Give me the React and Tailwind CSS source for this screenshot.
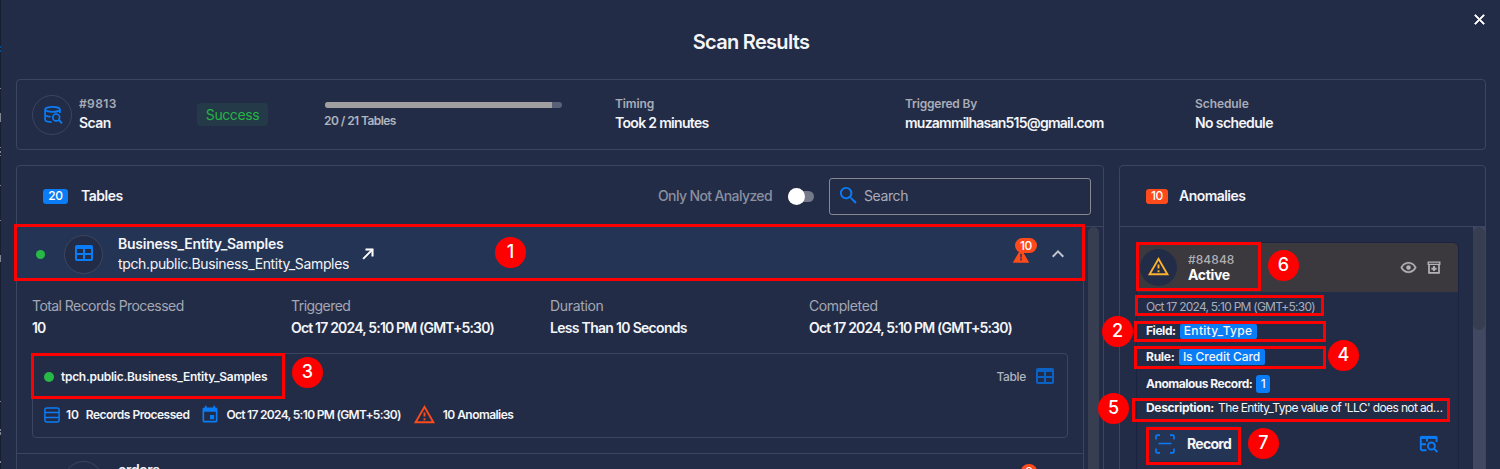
const ICONS = {
  table:
    "M5,4H19A2,2 0 0,1 21,6V18A2,2 0 0,1 19,20H5A2,2 0 0,1 3,18V6A2,2 0 0,1 5,4M5,8V12H11V8H5M13,8V12H19V8H13M5,14V18H11V14H5M13,14V18H19V14H13Z",
  arrow: "M5,17.59L15.59,7H9V5H19V15H17V8.41L6.41,19L5,17.59Z",
  alert: "M13 14H11V9H13M13 18H11V15H13M1 21H23L12 2L1 21Z",
  alertOutline:
    "M12,2L1,21H23M12,6L19.53,19H4.47M11,10V14H13V10M11,16V18H13V16",
  calendar:
    "M19,19H5V8H19M16,1V3H8V1H6V3H5C3.89,3 3,3.89 3,5V19A2,2 0 0,0 5,21H19A2,2 0 0,0 21,19V5C21,3.89 20.1,3 19,3H18V1M17,12H12V17H17V12Z",
  chevronUp: "M7.41,15.41L12,10.83L16.59,15.41L18,14L12,8L6,14L7.41,15.41Z",
  search:
    "M9.5,3A6.5,6.5 0 0,1 16,9.5C16,11.11 15.41,12.59 14.44,13.73L14.71,14H15.5L20.5,19L19,20.5L14,15.5V14.71L13.73,14.44C12.59,15.41 11.11,16 9.5,16A6.5,6.5 0 0,1 3,9.5A6.5,6.5 0 0,1 9.5,3M9.5,5C7,5 5,7 5,9.5C5,12 7,14 9.5,14C12,14 14,12 14,9.5C14,7 12,5 9.5,5Z",
  eye: "M12,9A3,3 0 0,1 15,12A3,3 0 0,1 12,15A3,3 0 0,1 9,12A3,3 0 0,1 12,9M12,4.5C17,4.5 21.27,7.61 23,12C21.27,16.39 17,19.5 12,19.5C7,19.5 2.73,16.39 1,12C2.73,7.61 7,4.5 12,4.5M3.18,12C4.83,15.36 8.24,17.5 12,17.5C15.76,17.5 19.17,15.36 20.82,12C19.17,8.64 15.76,6.5 12,6.5C8.24,6.5 4.83,8.64 3.18,12Z",
  close:
    "M19,6.41L17.59,5L12,10.59L6.41,5L5,6.41L10.59,12L5,17.59L6.41,19L12,13.41L17.59,19L19,17.59L13.41,12L19,6.41Z",
};

function Icon({ name, className }) {
  return (
    <svg viewBox="0 0 24 24" fill="currentColor" className={`shrink-0 ${className}`}>
      <path d={ICONS[name]} />
    </svg>
  );
}

function DatabaseSearchIcon() {
  return (
    <svg viewBox="0 0 19 18" className="h-[18px] w-[19px] shrink-0 text-[#0a7cf6]" fill="none" stroke="currentColor" strokeWidth="1.7">
      <ellipse cx="8.5" cy="3.4" rx="7.4" ry="2.5" />
      <path d="M1.1 3.4V13.6C1.1 15 3.6 16 7.6 16.1M1.1 8.5C1.1 9.6 3.2 10.5 6.6 10.7M15.9 3.4V7" />
      <circle cx="12.2" cy="11.4" r="3.4" />
      <path d="M14.7 13.9L18 17.2" strokeWidth="2" />
    </svg>
  );
}

function RowsIcon() {
  return (
    <svg viewBox="0 0 16 16" className="size-4 shrink-0 text-[#0a7cf6]" fill="none" stroke="currentColor" strokeWidth="1.5">
      <rect x="0.9" y="0.9" width="14.2" height="14.2" rx="2" />
      <path d="M1 5.6H15M1 10.4H15" />
    </svg>
  );
}

function ScanIcon() {
  return (
    <svg viewBox="0 0 20 20" className="size-5 shrink-0 text-[#0a7cf6]" fill="none" stroke="currentColor" strokeWidth="1.6">
      <path d="M1 5.5V2.5A1.4 1.4 0 0 1 2.4 1.1H5M15 1.1H17.6A1.4 1.4 0 0 1 19 2.5V5.5M19 14.5V17.5A1.4 1.4 0 0 1 17.6 18.9H15M5 18.9H2.4A1.4 1.4 0 0 1 1 17.5V14.5M3.5 9.5H16.5" />
    </svg>
  );
}

function TableSearchIcon() {
  return (
    <svg viewBox="0 0 20 18" className="h-[18px] w-5 shrink-0 text-[#0a7cf6]" fill="none" stroke="currentColor" strokeWidth="1.9">
      <path d="M7.5 15.2H3A1.2 1.2 0 0 1 1.8 14V2.5H17.6V7M1.8 9.3H7M8 3V6.5" />
      <path d="M1.8 2.4H17.6" strokeWidth="3" strokeLinejoin="round" />
      <circle cx="12.4" cy="11" r="3.5" />
      <path d="M15 13.6L18.4 17" />
    </svg>
  );
}

function ArchiveIcon() {
  return (
    <svg viewBox="0 0 14 13" className="h-[13px] w-3.5 shrink-0 text-[#b4b4b8]" fill="none" stroke="currentColor">
      <path d="M1.2 1.2H12.8V3.4H1.2Z" strokeWidth="1.3" />
      <path d="M2 4V11.8H12V4" strokeWidth="1.7" />
      <path d="M7 5V10M4.4 7.8H9.6" strokeWidth="1.9" />
    </svg>
  );
}

function Labelled({ label, value, className, labelClass, valueClass }) {
  return (
    <div className={className}>
      <div className={`whitespace-nowrap text-xs leading-[18px] font-semibold text-[#a9adb8] ${labelClass}`}>{label}</div>
      <div className={`whitespace-nowrap text-sm leading-5 font-semibold text-[#f4f5f8] ${valueClass}`}>{value}</div>
    </div>
  );
}

function Detail({ label, value, labelClass, valueClass }) {
  return (
    <div className="w-[259px]">
      <div className={`whitespace-nowrap text-sm leading-[22px] text-[#a3a8b3] ${labelClass}`}>{label}</div>
      <div className={`whitespace-nowrap text-sm leading-[22px] font-semibold text-[#f4f5f8] ${valueClass}`}>{value}</div>
    </div>
  );
}

// Specks of the page that stays visible beside the drawer
function PageEdge() {
  return (
    <svg viewBox="0 0 1 469" className="h-[469px] w-px shrink-0 bg-[#171f31]">
      <path d="M0 46h1v2h-1zM0 50h1v2h-1z" fill="#0b4d92" />
      <path
        d="M0 88h1v1h-1zM0 113h1v9h-1zM0 147h1v1h-1zM0 151h1v2h-1zM0 155h1v1h-1zM0 185h1v1h-1zM0 220h1v1h-1zM0 255h1v7h-1zM0 401h1v1h-1zM0 429h1v2h-1zM0 432h1v3h-1zM0 461h1v2h-1z"
        fill="#7f858f"
      />
    </svg>
  );
}

function Frame({ className }) {
  return <div className={`absolute border-3 border-[#ff0000] ${className}`} />;
}

function Marker({ n, className }) {
  return (
    <div className={`absolute flex size-[31px] justify-center rounded-full bg-[#ff0000] text-lg leading-[29px] font-medium text-white ${className}`}>
      {n}
    </div>
  );
}

function Summary() {
  return (
    <section className="flex h-[71px] w-[1470px] shrink-0 rounded border border-[#3c4560] pl-[15px]">
      <div className="flex w-[165px] pt-[15px]">
        <div className="flex size-10 items-center justify-center rounded-full border border-[#3c4560] pl-0.5">
          <DatabaseSearchIcon />
        </div>
        <Labelled className="ml-[7px]" label="#9813" value="Scan" labelClass="tracking-[0.4px]" valueClass="tracking-[-0.6px]" />
      </div>
      <div className="w-[128px] pt-[23px]">
        <div className="flex h-[23px] w-[71px] items-center justify-center rounded bg-[#243a48] text-sm leading-[21px] tracking-[-0.4px] text-[#24b445]">Success</div>
      </div>
      <div className="w-[290px] pt-[22px]">
        <div className="h-1.5 w-[237px] overflow-hidden rounded-full bg-[#596077]">
          <div className="h-full w-[227px] bg-[#a0a0a0]" />
        </div>
        <div className="mt-1 -ml-px text-xs leading-[18px] font-semibold tracking-[-0.57px] text-[#b0b4be]">20 / 21 Tables</div>
      </div>
      <Labelled className="w-[290px] pt-[15px]" label="Timing" value="Took 2 minutes" labelClass="tracking-[-0.14px]" valueClass="tracking-[-0.68px]" />
      <Labelled className="w-[290px] pt-[15px]" label="Triggered By" value="muzammilhasan515@gmail.com" labelClass="tracking-[-0.2px]" valueClass="tracking-[-0.77px]" />
      <Labelled className="pt-[15px]" label="Schedule" value="No schedule" labelClass="tracking-[-0.08px]" valueClass="tracking-[-0.62px]" />
    </section>
  );
}

function TablesPanel() {
  return (
    <section className="flex h-[320px] w-[1088px] shrink-0 flex-col rounded border border-[#3c4560]">
      <header className="flex h-[61px] shrink-0 items-center border-b border-[#3c4560] pr-3 pl-[26px]">
        <span className="flex h-[15px] w-[25px] items-center justify-center rounded-[3px] bg-[#0a7cf6] text-xs font-medium tracking-[-0.3px] text-white">20</span>
        <h2 className="ml-[13px] text-sm font-semibold tracking-[-0.5px] text-[#f4f5f8]">Tables</h2>
        <span className="ml-auto text-sm font-medium tracking-[-0.62px] text-[#8a90a0]">Only Not Analyzed</span>
        <div className="mr-[15px] ml-4 flex h-[17px] w-[26px] items-center">
          <div className="flex h-[11px] w-full items-center rounded-full bg-[#747a8a]">
            <div className="size-[17px] shrink-0 rounded-full bg-white" />
          </div>
        </div>
        <div className="flex h-[37px] w-[262px] items-center rounded-[3px] border border-[#85888f] pl-[7px]">
          <Icon name="search" className="mb-0.5 size-[23px] text-[#0a7cf6]" />
          <span className="ml-1 text-sm tracking-[-0.4px] text-[#a9adb8]">Search</span>
        </div>
      </header>
      <div className="flex h-[258px] shrink-0">
        <div className="w-[1067px] shrink-0 border-r border-[#3c4560]">
          <div className="flex h-[54px] items-center bg-[#243455] pl-[19px]">
            <span className="size-[9px] rounded-full bg-[#27b946]" />
            <div className="ml-[19px] flex size-[39px] items-center justify-center rounded-full border border-[#3c4560] bg-[#232c47]">
              <Icon name="table" className="mb-0.5 size-6 text-[#0a7cf6]" />
            </div>
            <div className="ml-[15px] w-[231px] whitespace-nowrap text-[#f4f5f8]">
              <div className="text-sm leading-5 font-semibold tracking-[-0.25px]">Business_Entity_Samples</div>
              <div className="text-sm leading-5 tracking-[-0.35px]">tpch.public.Business_Entity_Samples</div>
            </div>
            <Icon name="arrow" className="ml-2.5 size-[18px] stroke-white stroke-[0.7] text-white" />
            <div className="relative ml-auto flex">
              <Icon name="alert" className="mt-1 size-[18px] text-[#ff4a1c]" />
              <span className="absolute -top-[5px] left-[3px] flex h-[15px] w-[22px] items-center justify-center rounded-full bg-[#ff4a1c] text-xs font-medium tracking-[-0.3px] text-white">10</span>
            </div>
            <Icon name="chevronUp" className="mr-[13px] ml-4 size-6 text-[#c0c5d0]" />
          </div>
          <div className="flex pt-3.5 pl-[15px]">
            <Detail label="Total Records Processed" value="10" labelClass="tracking-[-0.56px]" valueClass="tracking-[-0.8px]" />
            <Detail label="Triggered" value="Oct 17 2024, 5:10 PM (GMT+5:30)" labelClass="tracking-[-0.55px]" valueClass="tracking-[-0.82px]" />
            <Detail label="Duration" value="Less Than 10 Seconds" labelClass="tracking-[-0.33px]" valueClass="tracking-[-0.7px]" />
            <Detail label="Completed" value="Oct 17 2024, 5:10 PM (GMT+5:30)" labelClass="tracking-[-0.4px]" valueClass="tracking-[-0.82px]" />
          </div>
          <div className="mt-3.5 ml-[15px] flex h-[85px] w-[1036px] flex-col rounded border border-[#3c4560] pr-2.5 pl-[11px] text-xs font-semibold text-[#f4f5f8]">
            <div className="mt-[11px] flex h-6 shrink-0 items-center">
              <span className="size-2.5 rounded-full bg-[#27b946]" />
              <span className="ml-[7px] tracking-[-0.28px]">tpch.public.Business_Entity_Samples</span>
              <span className="ml-auto font-medium tracking-[-0.35px] text-[#b0b4be]">Table</span>
              <Icon name="table" className="mb-0.5 ml-[7px] size-6 text-[#0b62c4]" />
            </div>
            <div className="mt-[15px] flex h-[22px] shrink-0 items-center">
              <RowsIcon />
              <span className="ml-1.5 tracking-[-0.1px]">10</span>
              <span className="ml-[7px] tracking-[-0.5px]">Records Processed</span>
              <Icon name="calendar" className="ml-[11px] size-5 text-[#0a7cf6]" />
              <span className="ml-1.5 tracking-[-0.69px]">Oct 17 2024, 5:10 PM (GMT+5:30)</span>
              <Icon name="alertOutline" className="mb-0.5 ml-3 size-[23px] text-[#ff4a1c]" />
              <span className="ml-[7px] tracking-[-0.55px]">10 Anomalies</span>
            </div>
          </div>
          <div className="mt-[15px] flex border-t border-[#3c4560] pt-[7px] pl-[47px]">
            <div className="size-[39px] rounded-full border border-[#3c4560]" />
            <div className="ml-[15px] text-sm leading-[18px] font-semibold tracking-[-0.4px] text-[#f4f5f8]">orders</div>
            <span className="mt-[3px] mr-[46px] ml-auto flex h-[15px] w-4 items-center justify-center rounded-full bg-[#ff4a1c] text-xs font-medium text-white">8</span>
          </div>
        </div>
        <div className="ml-1 w-[11px] rounded-t-full bg-[#373e52]" />
      </div>
    </section>
  );
}

function AnomaliesPanel() {
  return (
    <section className="flex h-[320px] w-[367px] shrink-0 flex-col rounded border border-[#3c4560]">
      <header className="flex h-[61px] shrink-0 items-center border-b border-[#3c4560] pl-[26px]">
        <span className="flex h-[15px] w-[22px] items-center justify-center rounded-[3px] bg-[#ff4a1c] text-xs font-medium tracking-[-0.3px] text-white">10</span>
        <h2 className="ml-[11px] text-sm font-semibold tracking-[-0.55px] text-[#f4f5f8]">Anomalies</h2>
      </header>
      <div className="flex h-[258px] shrink-0 justify-between">
        <div className="mt-[15px] ml-4 h-[260px] w-[323px] shrink-0 rounded-md border border-[#1a2340] text-xs">
          <div className="flex h-[49px] items-center rounded-t-[5px] bg-[#3b393e] pl-[3px]">
            <div className="flex size-[37px] items-center justify-center rounded-full bg-[#232c47]">
              <Icon name="alertOutline" className="mb-0.5 size-[23px] text-[#fbb12d]" />
            </div>
            <div className="ml-[11px]">
              <div className="leading-[15px] font-medium tracking-[0.07px] text-[#b0b0b4]">#84848</div>
              <div className="text-sm leading-4 font-bold tracking-[-0.35px] text-white">Active</div>
            </div>
            <Icon name="eye" className="ml-auto size-[17px] stroke-[#b4b4b8] stroke-[0.6] text-[#b4b4b8]" />
            <div className="mr-[17px] ml-[10px]">
              <ArchiveIcon />
            </div>
          </div>
          <div className="pl-[9px] whitespace-nowrap text-[#f4f5f8]">
            <div className="mt-[5px] h-5 leading-5 tracking-[-0.75px] text-[#a9adb8]">Oct 17 2024, 5:10 PM (GMT+5:30)</div>
            <div className="mt-1.5 flex h-4 items-center">
              <span className="font-bold tracking-[-0.45px]">Field:</span>
              <span className="ml-1 flex h-[15px] w-[77px] items-center justify-center rounded-xs bg-[#0a7cf6] font-medium tracking-[0.3px]">Entity_Type</span>
            </div>
            <div className="mt-2.5 flex h-4 items-center">
              <span className="font-bold tracking-[-0.25px]">Rule:</span>
              <span className="ml-1 flex h-4 w-[86px] items-center justify-center rounded-xs bg-[#0a7cf6] font-medium tracking-[-0.08px]">Is Credit Card</span>
            </div>
            <div className="mt-2.5 flex h-[18px] items-center">
              <span className="font-bold tracking-[-0.5px]">Anomalous Record:</span>
              <span className="ml-1 flex h-[18px] w-3.5 items-center justify-center rounded-[3px] bg-[#0a7cf6] font-medium">1</span>
            </div>
            <div className="mt-1.5 flex h-[18px] items-center">
              <span className="font-bold tracking-[-0.32px]">Description:</span>
              <span className="ml-1 tracking-[-0.62px]">The Entity_Type value of 'LLC' does not ad…</span>
            </div>
            <div className="mt-[9px] mr-[19px] flex h-[35px] items-center">
              <div className="flex h-full w-[93px] items-center bg-[#243455] pl-[9px]">
                <ScanIcon />
                <span className="ml-3 text-sm font-bold tracking-[-0.73px]">Record</span>
              </div>
              <div className="ml-auto">
                <TableSearchIcon />
              </div>
            </div>
          </div>
        </div>
        <div className="w-3 bg-[#414962]">
          <div className="h-[103px] rounded-full bg-[#373e52]" />
        </div>
      </div>
    </section>
  );
}

export default function App() {
  return (
    <div className="relative flex h-[469px] w-[1500px] overflow-hidden bg-[#232c47] font-[Inter,sans-serif]">
      <PageEdge />
      <main className="flex w-[1499px] flex-col pl-[15px]">
        <div className="flex h-[79px] shrink-0">
          <h1 className="w-[1470px] pt-[27px] text-center text-xl leading-[30px] font-semibold tracking-[-0.7px] text-[#f4f5f8]">Scan Results</h1>
          <Icon name="close" className="mt-[11px] -ml-[15px] size-[17px] stroke-white text-white" />
        </div>
        <Summary />
        <div className="mt-[15px] flex shrink-0 gap-[15px]">
          <TablesPanel />
          <AnomaliesPanel />
        </div>
      </main>

      <Frame className="top-[224px] left-[14px] h-[57px] w-[1071px]" />
      <Frame className="top-[353px] left-[31px] h-[46px] w-[254px]" />
      <Frame className="top-[242px] left-[1136px] h-[49px] w-[125px]" />
      <Frame className="top-[295px] left-[1135px] h-[21px] w-[189px]" />
      <Frame className="top-[321px] left-[1134px] h-[21px] w-[192px]" />
      <Frame className="top-[346px] left-[1134px] h-[23px] w-[192px]" />
      <Frame className="top-[398px] left-[1132px] h-[24px] w-[318px]" />
      <Frame className="top-[427px] left-[1146px] h-[38px] w-[95px]" />
      <Marker n="1" className="top-[237px] left-[495px]" />
      <Marker n="3" className="top-[357px] left-[292px]" />
      <Marker n="6" className="top-[250px] left-[1268px]" />
      <Marker n="2" className="top-[316px] left-[1102px]" />
      <Marker n="4" className="top-[340px] left-[1328px]" />
      <Marker n="5" className="top-[393px] left-[1098px]" />
      <Marker n="7" className="top-[428px] left-[1248px]" />
    </div>
  );
}
